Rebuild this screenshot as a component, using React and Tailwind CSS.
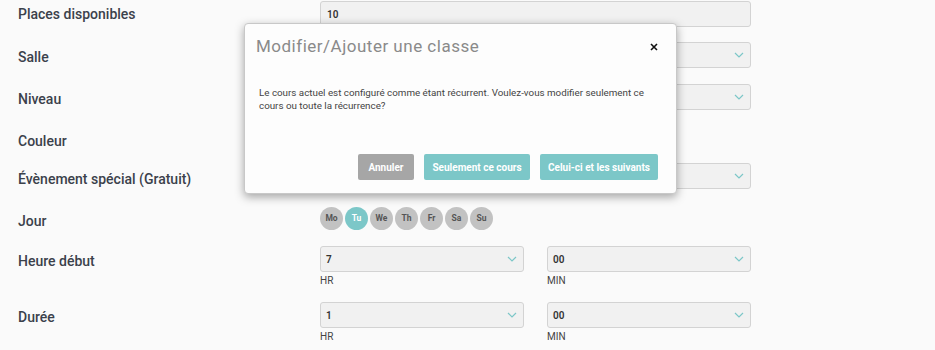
const font = { fontFamily: 'Roboto, "Liberation Sans", sans-serif' }

function Chevron() {
  return (
    <svg width="10" height="6" viewBox="0 0 10 6" className="shrink-0">
      <path d="M1 1l4 4 4-4" fill="none" stroke="#7cc7c8" strokeWidth="1.2" />
    </svg>
  )
}

function Select({ value, className = '' }) {
  return (
    <div className={`flex h-[26px] items-center justify-between rounded-[3px] border border-[#d3d3d3] bg-[#f1f1f1] pl-[5px] pr-[6px] ${className}`}>
      <span className="text-[10px] font-semibold text-[#333]">{value}</span>
      <Chevron />
    </div>
  )
}

function Row({ label, top, shift = 2, children }) {
  return (
    <div className="flex items-start" style={{ marginTop: top }}>
      <div
        className="flex h-[26px] w-[320px] shrink-0 items-center pl-[18px] text-[14px] font-medium text-[#3b414b]"
        style={{ paddingTop: shift * 2 }}
      >
        {label}
      </div>
      <div className="w-[431px]">{children}</div>
    </div>
  )
}

const days = ['Mo', 'Tu', 'We', 'Th', 'Fr', 'Sa', 'Su']

function TimeRow({ hr }) {
  return (
    <div className="flex gap-[23px]">
      <div className="w-[204px]">
        <Select value={hr} />
        <div className="mt-[1px] text-[10px] text-[#444]">HR</div>
      </div>
      <div className="w-[204px]">
        <Select value="00" />
        <div className="mt-[1px] text-[10px] text-[#444]">MIN</div>
      </div>
    </div>
  )
}

export default function App() {
  return (
    <div className="relative h-[350px] w-[935px] overflow-hidden bg-[#fafafa]" style={font}>
      <div className="flex flex-col">
        <Row label="Places disponibles" top={1} shift={0}>
          <div className="flex h-[26px] items-center rounded-[3px] border border-[#d3d3d3] bg-[#f1f1f1] pl-[6px] text-[10px] font-semibold text-[#333]">
            10
          </div>
        </Row>
        <Row label="Salle" top={15}>
          <Select value="" />
        </Row>
        <Row label="Niveau" top={16}>
          <Select value="" />
        </Row>
        <Row label="Couleur" top={16}>
          <div className="h-[26px]" />
        </Row>
        <Row label="Évènement spécial (Gratuit)" top={11} shift={3}>
          <Select value="" />
        </Row>
        <Row label="Jour" top={18} shift={1}>
          <div className="flex h-[23px] items-center gap-[2px]">
            {days.map(d => (
              <div
                key={d}
                className={`flex h-[23px] w-[23px] items-center justify-center rounded-full text-[8.5px] font-bold ${d === 'Tu' ? 'bg-[#7cc7c8] text-white' : 'bg-[#c2c2c2] text-[#555]'}`}
              >
                {d}
              </div>
            ))}
          </div>
        </Row>
        <Row label="Heure début" top={13}>
          <TimeRow hr="7" />
        </Row>
        <Row label="Durée" top={14}>
          <TimeRow hr="1" />
        </Row>
      </div>

      {/* confirmation modal */}
      <div className="absolute left-[244px] top-[23px] flex h-[171px] w-[433px] flex-col rounded-[4px] border border-[#c8c8c8] bg-[#fdfdfd] shadow-[0_3px_10px_rgba(0,0,0,0.35)]">
        <div className="flex items-center justify-between pl-[11px] pr-[18px] pt-[10px]">
          <span className="text-[17px] tracking-[0.5px] text-[#8a8a8a]">Modifier/Ajouter une classe</span>
          <svg width="8" height="8" viewBox="0 0 8 8">
            <path d="M1 1l6 6M7 1L1 7" stroke="#111" strokeWidth="1.6" />
          </svg>
        </div>
        <p className="mt-[26px] pl-[14px] pr-[20px] text-[9.8px] leading-[13px] text-[#444]">
          Le cours actuel est configuré comme étant récurrent. Voulez-vous modifier seulement ce cours ou toute la récurrence?
        </p>
        <div className="mt-auto mb-[13px] flex justify-end gap-[10px] pr-[18px]">
          <button className="h-[26px] w-[56px] rounded-[2px] bg-[#a6a6a6] text-[10px] font-bold text-white">Annuler</button>
          <button className="h-[26px] w-[106px] rounded-[2px] bg-[#7cc7c8] text-[10px] font-bold text-white">Seulement ce cours</button>
          <button className="h-[26px] w-[118px] rounded-[2px] bg-[#7cc7c8] text-[10px] font-bold text-white">Celui-ci et les suivants</button>
        </div>
      </div>
    </div>
  )
}
